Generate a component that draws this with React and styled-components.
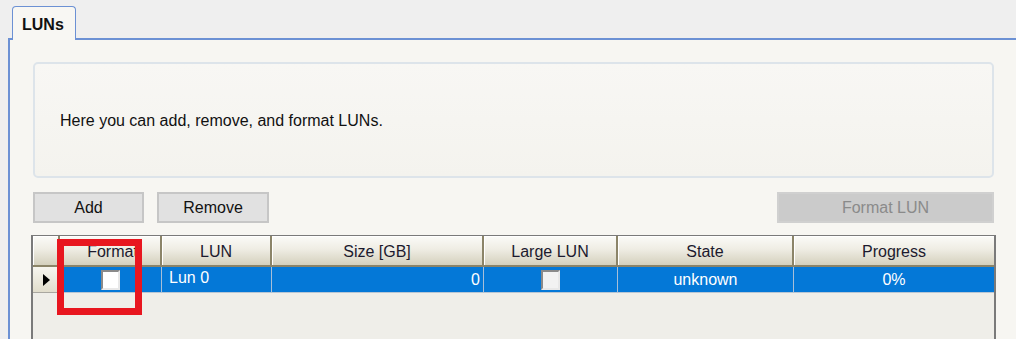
import React from 'react';
import styled, { createGlobalStyle } from 'styled-components';

const GlobalStyle = createGlobalStyle`
  html, body {
    margin: 0;
    padding: 0;
    overflow: hidden;
    background: #efefef;
    font-family: "Liberation Sans", Arial, sans-serif;
  }
`;

const Page = styled.div`
  width: 1016px;
  height: 339px;
  padding-top: 6px;
  box-sizing: border-box;
  display: flex;
  flex-direction: column;
  overflow: hidden;
`;

const TabStrip = styled.div`
  display: flex;
  padding-left: 12px;
`;

const Tab = styled.div`
  position: relative;
  z-index: 1;
  width: 64px;
  height: 34px;
  margin-bottom: -2px;
  box-sizing: border-box;
  border: 1px solid #6c91d4;
  border-bottom: none;
  border-radius: 4px 4px 0 0;
  background: #f8f7f3;
  font-size: 16px;
  font-weight: bold;
  color: #111;
  padding: 9px 0 0 9px;
`;

const Panel = styled.div`
  flex: 1;
  min-height: 0;
  margin-left: 8px;
  border-top: 2px solid #6c91d4;
  border-left: 2px solid #6c91d4;
  background: #f7f6f2;
  padding: 22px 0 0 23px;
  box-sizing: border-box;
  display: flex;
`;

const Content = styled.div`
  width: 961px;
  display: flex;
  flex-direction: column;
`;

const InfoBox = styled.div`
  height: 116px;
  flex-shrink: 0;
  box-sizing: border-box;
  border: 2px solid #dde4ea;
  border-radius: 5px;
  background: linear-gradient(#f8f7f4, #f4f3ee);
  display: flex;
  align-items: center;
  padding: 2px 0 0 25px;
  font-size: 16px;
  color: #111;
`;

const ButtonRow = styled.div`
  display: flex;
  gap: 13px;
  margin-top: 14px;
`;

const Button = styled.div`
  width: ${p => p.$w}px;
  height: 31px;
  box-sizing: border-box;
  border: 2px solid ${p => (p.$disabled ? '#d0d0d0' : '#c6c6c6')};
  background: ${p => (p.$disabled ? '#cbcbcb' : '#e1e1e1')};
  color: ${p => (p.$disabled ? '#8a8a8a' : '#111')};
  font-size: 16px;
  display: flex;
  align-items: center;
  justify-content: center;
  margin-left: ${p => (p.$push ? 'auto' : '0')};
`;

const Grid = styled.div`
  position: relative;
  flex: 1;
  margin-top: 12px;
  margin-left: -2px;
  width: 965px;
  box-sizing: border-box;
  border: 1px solid #7a7a7a;
  border-left-width: 2px;
  border-right-width: 2px;
  border-bottom: none;
  background: #efeee9;
`;

const Row = styled.div`
  display: grid;
  grid-template-columns: 27px 102px 110px 212px 134px 176px 1fr;
  height: ${p => (p.$header ? 31 : 26)}px;
`;

const HeadCell = styled.div`
  box-sizing: border-box;
  background: linear-gradient(#fbfbf8 0%, #efede4 45%, #d4d0bd 100%);
  border-right: 2px solid #8b8468;
  border-bottom: 2px solid #8b8468;
  box-shadow: inset 1px 1px 0 #ffffff;
  display: flex;
  align-items: center;
  justify-content: center;
  font-size: 16px;
  color: #1c1a2e;
  padding: 2px 0 0 ${p => p.$shift || 0}px;
  &:last-child { border-right: none; }
`;

const RowHead = styled.div`
  box-sizing: border-box;
  background: linear-gradient(#f6f5ef, #e1ddcc);
  border-right: 1px solid #a9a7a0;
  border-bottom: 1px solid #a9a7a0;
  display: flex;
  align-items: center;
  justify-content: center;
`;

const Cell = styled.div`
  box-sizing: border-box;
  background: #0478d7;
  border-right: 1px solid #a8bfd8;
  border-bottom: 1px solid #b8c6d4;
  color: #fff;
  font-size: 16px;
  display: flex;
  align-items: center;
  justify-content: ${p => p.$align || 'center'};
  padding: ${p => (p.$align === 'flex-start' ? '0 0 4px 7px' : p.$align === 'flex-end' ? '0 3px 0 0' : '0')};
  &:last-child { border-right: none; }
`;

const Check = styled.div`
  width: 19px;
  height: 20px;
  box-sizing: border-box;
  border: 2px solid #8a8a8a;
  border-right-color: #e8e8e8;
  border-bottom-color: #e8e8e8;
  background: ${p => p.$bg || '#ffffff'};
`;

const Highlight = styled.div`
  position: absolute;
  left: 24px;
  top: 3px;
  width: 85px;
  height: 76px;
  box-sizing: border-box;
  border: 7px solid #e8161f;
  pointer-events: none;
`;

const Arrow = () => (
  <svg width="7" height="12" viewBox="0 0 7 12">
    <path d="M0 0 L7 6 L0 12 Z" fill="#000" />
  </svg>
);

const columns = [
  { label: 'Format', shift: 5 },
  { label: 'LUN' },
  { label: 'Size [GB]' },
  { label: 'Large LUN' },
  { label: 'State' },
  { label: 'Progress' },
];

export default function App() {
  return (
    <Page>
      <GlobalStyle />
      <TabStrip>
        <Tab>LUNs</Tab>
      </TabStrip>
      <Panel>
        <Content>
          <InfoBox>Here you can add, remove, and format LUNs.</InfoBox>
          <ButtonRow>
            <Button $w={111}>Add</Button>
            <Button $w={112}>Remove</Button>
            <Button $w={217} $disabled $push>Format LUN</Button>
          </ButtonRow>
          <Grid>
            <Row $header>
              <HeadCell />
              {columns.map(c => (
                <HeadCell key={c.label} $shift={c.shift}>{c.label}</HeadCell>
              ))}
            </Row>
            <Row>
              <RowHead><Arrow /></RowHead>
              <Cell><Check /></Cell>
              <Cell $align="flex-start">Lun 0</Cell>
              <Cell $align="flex-end">0</Cell>
              <Cell><Check $bg="#f2f2f2" /></Cell>
              <Cell>unknown</Cell>
              <Cell>0%</Cell>
            </Row>
            <Highlight />
          </Grid>
        </Content>
      </Panel>
    </Page>
  );
}
